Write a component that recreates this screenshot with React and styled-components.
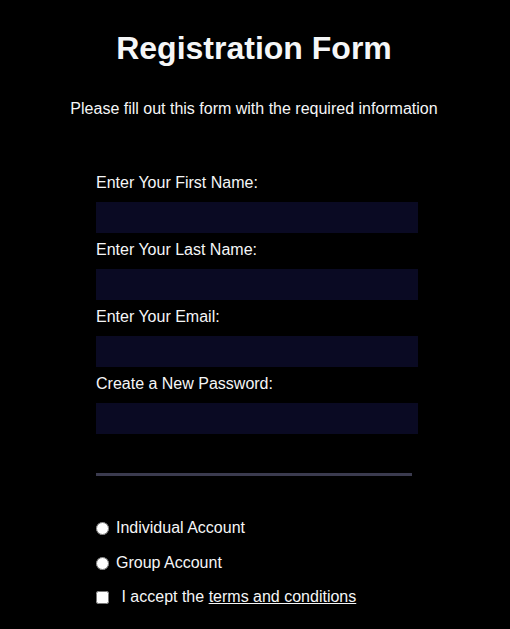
import styled, { createGlobalStyle } from "styled-components";

const GlobalStyle = createGlobalStyle`
  body {
    margin: 0;
    background-color: #000000;
    color: #f5f6f7;
    font-family: "Liberation Sans", Arial, sans-serif;
    font-size: 16px;
  }
`;

const Page = styled.div`
  box-sizing: border-box;
  padding: 30px 2px 0 0;
`;

const Title = styled.h1`
  margin: 0;
  font-size: 32px;
  line-height: 37px;
  font-weight: bold;
  text-align: center;
`;

const Intro = styled.p`
  margin: 33px 0 0;
  line-height: 18px;
  text-align: center;
`;

const Form = styled.form`
  width: 316px;
  margin: 0 auto;
`;

const Fieldset = styled.div`
  display: flex;
  flex-direction: column;
  gap: ${({ gap }) => gap};
  padding: ${({ top }) => top} 0 ${({ bottom }) => bottom};
  border-bottom: ${({ divider }) => (divider ? "3px solid #3b3b4f" : "none")};
`;

const FieldLabel = styled.label`
  display: flex;
  flex-direction: column;
  line-height: 18px;
`;

const TextInput = styled.input`
  box-sizing: content-box;
  width: 100%;
  height: 29px;
  margin: 10px 0 0;
  padding: 0 2px;
  border: 1px solid #0a0a23;
  background-color: #0a0a23;
  color: #ffffff;
  font-family: inherit;
  outline: none;
`;

const OptionLabel = styled.label`
  display: block;
  line-height: 18px;
`;

const Inline = styled.input`
  width: 13px;
  height: 13px;
  margin: 0 ${({ space }) => space} 0 0;
  vertical-align: middle;
`;

const Link = styled.a`
  color: #f5f6f7;
  text-decoration: underline;
`;

const fields = [
  { id: "first-name", label: "Enter Your First Name:", type: "text" },
  { id: "last-name", label: "Enter Your Last Name:", type: "text" },
  { id: "email", label: "Enter Your Email:", type: "email" },
  { id: "new-password", label: "Create a New Password:", type: "password" },
];

const App = () => {
  return (
    <Page>
      <GlobalStyle />
      <Title>Registration Form</Title>
      <Intro>Please fill out this form with the required information</Intro>
      <Form onSubmit={(e) => e.preventDefault()}>
        <Fieldset top="56px" bottom="39px" gap="8px" divider>
          {fields.map(({ id, label, type }) => (
            <FieldLabel key={id} htmlFor={id}>
              {label}
              <TextInput id={id} type={type} />
            </FieldLabel>
          ))}
        </Fieldset>
        <Fieldset top="43px" bottom="24px" gap="16.5px">
          <OptionLabel htmlFor="personal-account">
            <Inline id="personal-account" type="radio" name="account-type" space="7px" />
            Individual Account
          </OptionLabel>
          <OptionLabel htmlFor="business-account">
            <Inline id="business-account" type="radio" name="account-type" space="7px" />
            Group Account
          </OptionLabel>
          <OptionLabel htmlFor="terms-and-conditions">
            <Inline id="terms-and-conditions" type="checkbox" space="8px" /> I accept the{" "}
            <Link href="#">terms and conditions</Link>
          </OptionLabel>
        </Fieldset>
      </Form>
    </Page>
  );
};

export default App;
